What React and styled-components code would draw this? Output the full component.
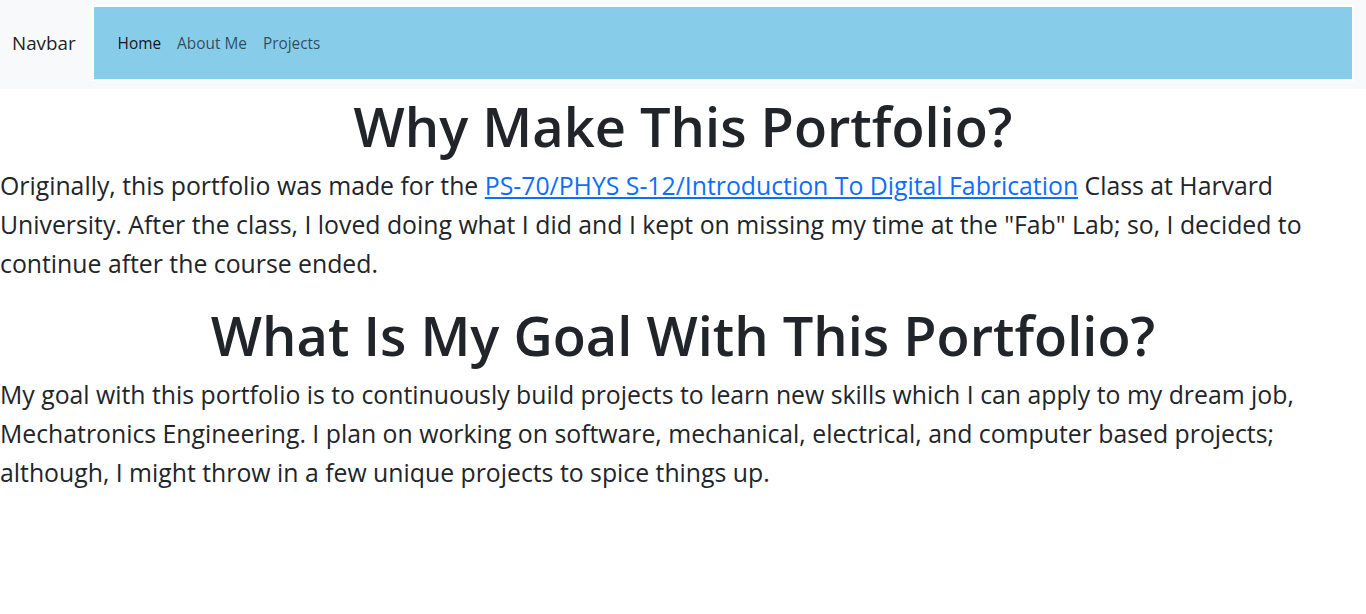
import React from "react";
import styled, { createGlobalStyle } from "styled-components";

const Global = createGlobalStyle`
  * { box-sizing: border-box; }
  body {
    margin: 0;
    background: #fff;
    color: #212529;
    font-family: "Open Sans", "Noto Sans", sans-serif;
  }
`;

const Nav = styled.nav`
  display: flex;
  align-items: center;
  height: 89px;
  padding: 5px 12px 8px;
  background: #f8f9fa;
`;

const Brand = styled.a`
  font-size: 18.8px;
  color: rgba(0, 0, 0, 0.9);
  text-decoration: none;
  margin-right: 16px;
  white-space: nowrap;
`;

const Collapse = styled.div`
  flex: 1;
  align-self: stretch;
  display: flex;
  align-items: center;
  background: #87cdea;
  border: 2px solid #fff;
  padding: 0 16px;
`;

const NavList = styled.ul`
  display: flex;
  list-style: none;
  margin: 0;
  padding: 0;
`;

const NavLink = styled.a`
  display: block;
  padding: 8px;
  font-size: 15.4px;
  text-decoration: none;
  color: ${(p) => (p.$active ? "rgba(0,0,0,0.9)" : "rgba(0,0,0,0.65)")};
`;

const Main = styled.main`
  padding-top: 4px;
`;

const Heading = styled.h1`
  margin: 0 0 6px;
  text-align: center;
  font-size: 54.2px;
  font-weight: 600;
  line-height: 67px;
`;

const Para = styled.p`
  margin: 0 0 19px;
  font-size: 24.8px;
  line-height: 39px;
`;

const Link = styled.a`
  color: #0d6efd;
  text-decoration: underline;
`;

export default function App() {
  return (
    <>
      <Global />
      <Nav>
        <Brand href="#">Navbar</Brand>
        <Collapse>
          <NavList>
            <li><NavLink href="#" $active>Home</NavLink></li>
            <li><NavLink href="#">About Me</NavLink></li>
            <li><NavLink href="#">Projects</NavLink></li>
          </NavList>
        </Collapse>
      </Nav>
      <Main>
        <Heading>Why Make This Portfolio?</Heading>
        <Para>
          Originally, this portfolio was made for the{" "}
          <Link href="#">PS-70/PHYS S-12/Introduction To Digital Fabrication</Link>{" "}
          Class at Harvard University. After the class, I loved doing what I did and I kept on
          missing my time at the "Fab" Lab; so, I decided to continue after the course ended.
        </Para>
        <Heading as="h2">What Is My Goal With This Portfolio?</Heading>
        <Para>
          My goal with this portfolio is to continuously build projects to learn new skills which
          I can apply to my dream job, Mechatronics Engineering. I plan on working on software,
          mechanical, electrical, and computer based projects; although, I might throw in a few
          unique projects to spice things up.
        </Para>
      </Main>
    </>
  );
}
